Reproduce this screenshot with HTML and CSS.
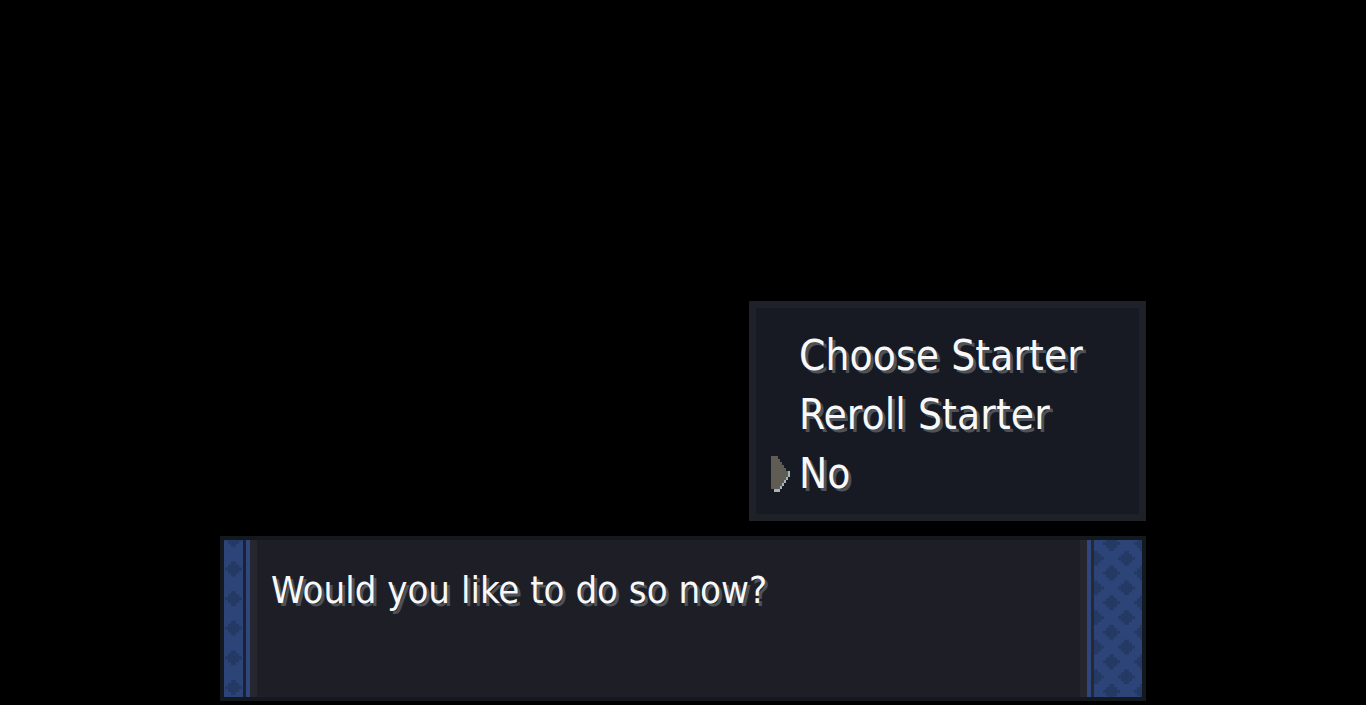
FILE: index.html
```html
<!DOCTYPE html>
<html lang="en">
<head>
    <meta charset="UTF-8">
    <meta name="viewport" content="width=device-width, initial-scale=1.0">
    <title>Starter</title>
    <link rel="stylesheet" href="styles.css">
</head>
<body>
<div class="stage">
    <div class="ui">
        <div class="menu">
            <div class="item"><span class="cursorSlot"></span><span class="label">Choose Starter</span></div>
            <div class="item"><span class="cursorSlot"></span><span class="label">Reroll Starter</span></div>
            <div class="item selected">
                <span class="cursorSlot">
                    <svg width="22" height="36" viewBox="0 0 22 36">
                        <path d="M0 0H7V3H9V6H11V9H13V12H15V15H17V21H15V24H13V27H11V30H9V33H4V36H3V33H0Z" fill="#5f5c54"/>
                        <path d="M17 15H19V21H17V24H15V27H13V30H11V33H9V36H3V33H9V30H11V27H13V24H15V21H17Z" fill="#a3b4b6"/>
                    </svg>
                </span>
                <span class="label">No</span>
            </div>
        </div>
        <div class="dialog">
            <div class="pattern patLeft">
                <svg width="19" height="157">
                    <defs>
                        <pattern id="pl" width="19" height="29.6" patternUnits="userSpaceOnUse" y="-11">
                            <path d="M7 0H12V3H15V6H18V9H15V12H12V15H7V12H4V9H1V6H4V3H7Z" fill="#243963" transform="translate(0 3)"/>
                        </pattern>
                    </defs>
                    <rect width="19" height="157" fill="url(#pl)"/>
                </svg>
            </div>
            <div class="gapDark"></div>
            <div class="stripe"></div>
            <div class="col"></div>
            <div class="text">Would you like to do so now?</div>
            <div class="col"></div>
            <div class="stripe"></div>
            <div class="lineDark"></div>
            <div class="pattern patRight">
                <svg width="48" height="157">
                    <defs>
                        <pattern id="pr" width="31" height="29.6" patternUnits="userSpaceOnUse" x="1" y="-4">
                            <path d="M7 0H12V3H15V6H18V9H15V12H12V15H7V12H4V9H1V6H4V3H7Z" fill="#243963" transform="translate(7 0)"/>
                            <path d="M7 0H12V3H15V6H18V9H15V12H12V15H7V12H4V9H1V6H4V3H7Z" fill="#243963" transform="translate(-9 15)"/>
                            <path d="M7 0H12V3H15V6H18V9H15V12H12V15H7V12H4V9H1V6H4V3H7Z" fill="#243963" transform="translate(22 15)"/>
                            <path d="M7 0H12V3H15V6H18V9H15V12H12V15H7V12H4V9H1V6H4V3H7Z" fill="#243963" transform="translate(-9 -15)"/>
                            <path d="M7 0H12V3H15V6H18V9H15V12H12V15H7V12H4V9H1V6H4V3H7Z" fill="#243963" transform="translate(22 -15)"/>
                        </pattern>
                    </defs>
                    <rect width="48" height="157" fill="url(#pr)"/>
                </svg>
            </div>
        </div>
    </div>
</div>
</body>
</html>
```
FILE: styles.css
```css
* {
    box-sizing: border-box;
}
html, body {
    margin: 0;
    background: #000;
}
.stage {
    height: 705px;
    display: flex;
    flex-direction: column;
    justify-content: flex-end;
    padding: 0 0 4px 220px;
}
.ui {
    width: 926px;
    display: flex;
    flex-direction: column;
}
.menu {
    align-self: flex-end;
    width: 397px;
    height: 220px;
    margin-bottom: 15px;
    background: #171a22;
    border: 7px solid #1e2128;
    padding: 18px 0 0 15px;
}
.item {
    display: flex;
    align-items: center;
    height: 59px;
}
.cursorSlot {
    width: 28px;
    height: 36px;
    display: flex;
}
.label, .text {
    font-family: "DejaVu Sans Condensed", "DejaVu Sans", sans-serif;
    font-stretch: condensed;
    color: #f8f8f8;
    text-shadow: 3px 3px 0 #4b525a;
    white-space: nowrap;
}
.label {
    font-size: 42px;
    letter-spacing: 0.1px;
}
.dialog {
    height: 165px;
    display: flex;
    border: 4px solid #141920;
    background: #1e1f26;
}
.pattern {
    background: #2d4479;
    overflow: hidden;
}
.pattern svg {
    display: block;
}
.patLeft {
    width: 19px;
}
.patRight {
    width: 48px;
}
.gapDark {
    width: 3px;
    background: #1c2230;
}
.stripe {
    width: 4px;
    background: #30467e;
}
.col {
    width: 7px;
    background: #26262e;
}
.lineDark {
    width: 3px;
    background: #2b2730;
}
.text {
    flex: 1;
    font-size: 38px;
    letter-spacing: 0;
    padding: 28px 0 0 14px;
}
```
